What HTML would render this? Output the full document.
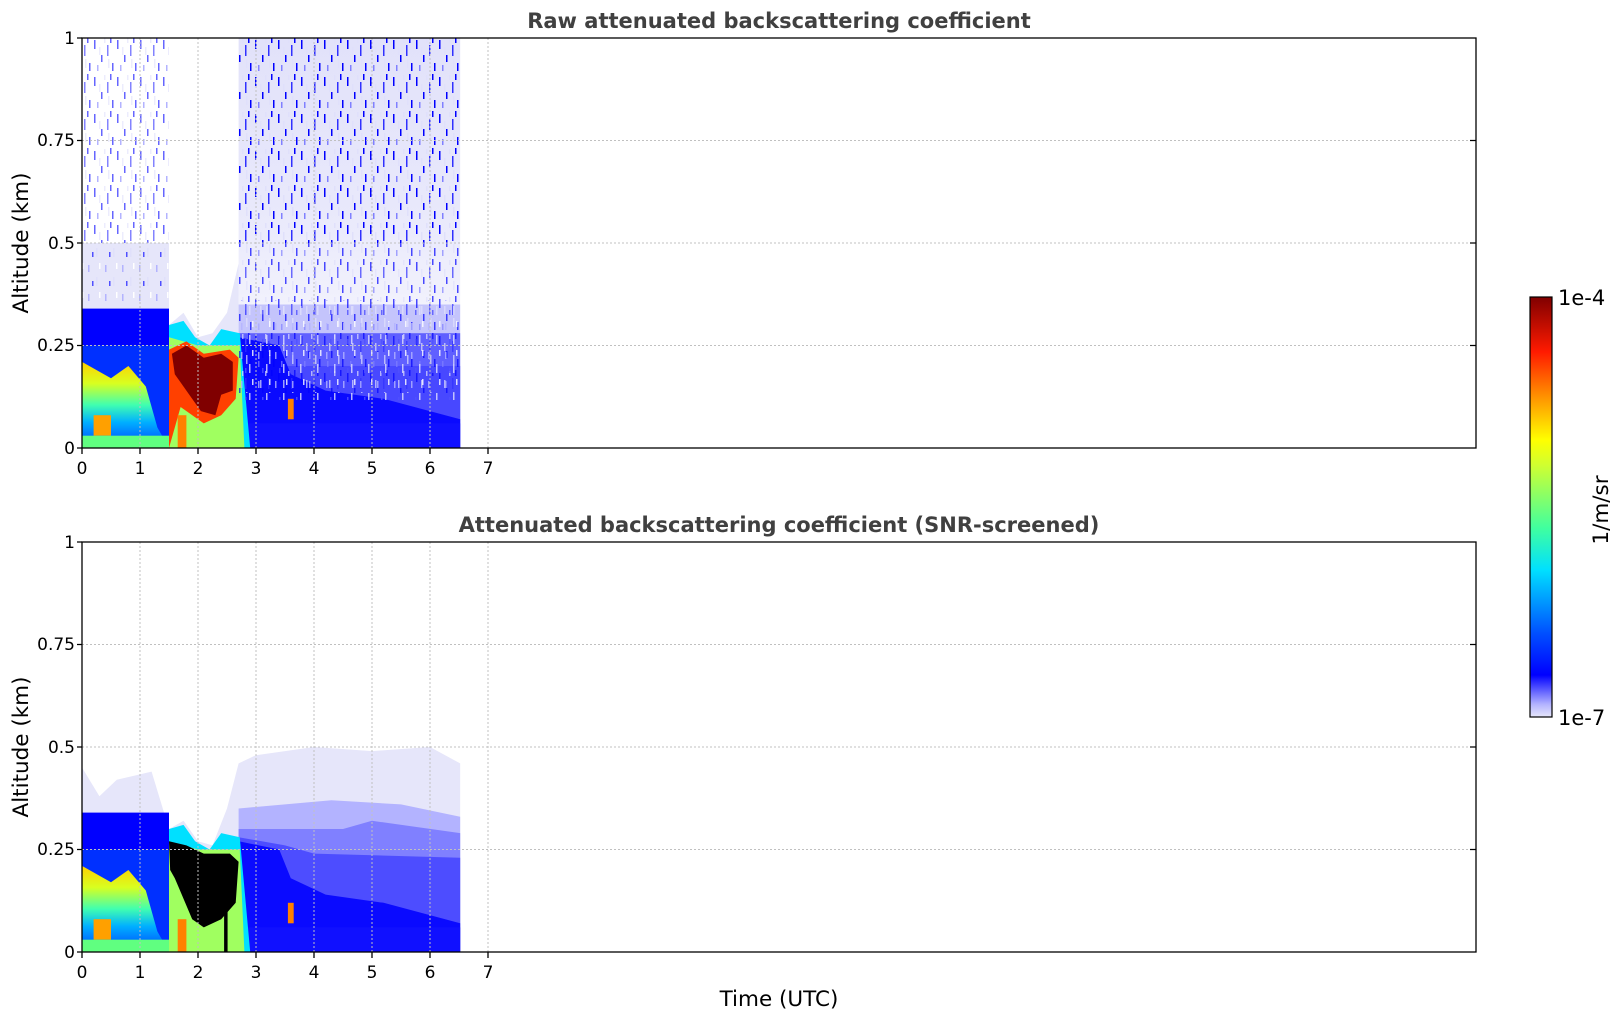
<!DOCTYPE html>
<html><head><meta charset="utf-8"><style>
body{margin:0;width:1621px;height:1020px;background:#fff;position:relative;overflow:hidden;font-family:"DejaVu Sans","Liberation Sans",sans-serif;}
</style></head><body>
<svg width="1621" height="1020" style="position:absolute;left:0;top:0" font-family="DejaVu Sans, Liberation Sans, sans-serif">
<defs>
<pattern id="sp" width="23" height="37" patternUnits="userSpaceOnUse">
<rect x="2" y="3" width="1.5" height="9" fill="#0000ff"/><rect x="9" y="18" width="1.5" height="7" fill="#0000ff"/><rect x="15" y="8" width="1.5" height="11" fill="#3030ff"/><rect x="20" y="26" width="1.5" height="8" fill="#0000ff"/><rect x="5" y="28" width="1.5" height="6" fill="#8080ff"/><rect x="12" y="1" width="1.5" height="5" fill="#e0e0fb"/><rect x="18" y="0" width="1.5" height="6" fill="#0000ff"/><rect x="7" y="10" width="1.5" height="8" fill="#e0e0fb"/><rect x="16" y="22" width="1.5" height="9" fill="#e0e0fb"/>
</pattern>
<pattern id="sp2" width="17" height="29" patternUnits="userSpaceOnUse">
<rect x="3" y="4" width="1.5" height="7" fill="#b3b3ff"/><rect x="11" y="16" width="1.5" height="9" fill="#e0e0fb"/><rect x="7" y="20" width="1.5" height="5" fill="#5050ff"/><rect x="14" y="2" width="1.5" height="6" fill="#ffffff"/>
</pattern>
<linearGradient id="g1" x1="0" y1="1" x2="0" y2="0">
<stop offset="0" stop-color="#ffd000"/><stop offset="0.25" stop-color="#d8ff20"/><stop offset="0.5" stop-color="#40ffb0"/><stop offset="0.7" stop-color="#00b0ff"/><stop offset="1" stop-color="#0040ff"/>
</linearGradient>
<linearGradient id="lv" x1="0" y1="1" x2="0" y2="0">
<stop offset="0" stop-color="#e2e2fa"/><stop offset="0.4" stop-color="#e8e8fb"/><stop offset="1" stop-color="#ffffff"/>
</linearGradient>
<linearGradient id="cb" x1="0" y1="1" x2="0" y2="0">
<stop offset="0" stop-color="#e6e6fa"/><stop offset="0.03" stop-color="#b3b3ff"/><stop offset="0.07" stop-color="#4d4dff"/><stop offset="0.1" stop-color="#0000ff"/><stop offset="0.2" stop-color="#0050ff"/><stop offset="0.35" stop-color="#00e0ff"/><stop offset="0.45" stop-color="#40ff9f"/><stop offset="0.6" stop-color="#d0ff30"/><stop offset="0.66" stop-color="#ffff00"/><stop offset="0.75" stop-color="#ffa000"/><stop offset="0.87" stop-color="#ff1a00"/><stop offset="1" stop-color="#800000"/>
</linearGradient>
</defs>

<!-- PLOT 1 -->
<g transform="translate(82,448) scale(58,-410)">
<rect x="0" y="0" width="1.5" height="0.5" fill="#e6e6fa"/>
<rect x="2.7" y="0" width="3.82" height="1" fill="url(#lv)"/>
<polygon points="1.5,0 1.5,0.3 1.75,0.33 2.0,0.27 2.25,0.28 2.5,0.33 2.7,0.45 2.7,0 " fill="#e6e6fa"/>
<rect x="2.7" y="0" width="3.82" height="0.35" fill="#c4c4fc"/>
<rect x="2.7" y="0" width="3.82" height="0.28" fill="#6060ff"/>
<rect x="2.7" y="0" width="3.82" height="0.2" fill="#4848ff"/>
<polygon points="2.7,0 2.7,0.27 3.4,0.25 3.6,0.18 4.2,0.14 5.2,0.12 6.52,0.07 6.52,0" fill="#0a0aff"/>
<rect x="2.7" y="0" width="3.82" height="0.06" fill="#1010ff"/>
<rect x="0" y="0" width="1.5" height="0.34" fill="#0000ff"/>
<rect x="0" y="0" width="1.5" height="0.25" fill="#0030ff"/>
<polygon points="0,0 0,0.21 0.5,0.17 0.8,0.2 1.1,0.15 1.3,0.05 1.5,0 " fill="url(#g1)"/>
<rect x="0.2" y="0.03" width="0.3" height="0.05" fill="#ffa000"/>
<polygon points="1.5,0 1.5,0.3 1.75,0.31 1.95,0.27 2.2,0.25 2.4,0.29 2.72,0.28 2.9,0 " fill="#00e0ff"/>
<polygon points="1.5,0 1.5,0.27 2.0,0.25 2.72,0.25 2.8,0 " fill="#a0ff60"/>
<polygon points="1.5,0.24 1.8,0.26 2.1,0.23 2.55,0.24 2.7,0.22 2.65,0.12 2.4,0.08 2.1,0.06 1.7,0.1 1.6,0.05 1.5,0" fill="#ff4000"/>
<polygon points="1.55,0.23 1.8,0.25 2.1,0.22 2.4,0.23 2.6,0.21 2.6,0.14 2.4,0.13 2.3,0.08 2.05,0.09 1.85,0.13 1.6,0.18" fill="#800000"/>
<rect x="1.65" y="0" width="0.15" height="0.08" fill="#ff8000"/>
<rect x="3.55" y="0.07" width="0.1" height="0.05" fill="#ff8000"/>
<rect x="0" y="0" width="1.5" height="0.03" fill="#60ff80"/>
</g>
<rect x="82" y="38" width="87" height="205" fill="url(#sp)" opacity="0.6"/>
<rect x="82" y="243" width="87" height="60" fill="url(#sp2)"/>
<rect x="239" y="38" width="221" height="205" fill="url(#sp)"/>
<rect x="239" y="243" width="221" height="150" fill="url(#sp)" opacity="0.7"/>
<rect x="239" y="300" width="221" height="100" fill="url(#sp2)" opacity="0.8"/>

<!-- PLOT 2 -->
<g transform="translate(82,952) scale(58,-410)">
<polygon points="0,0 0,0.45 0.3,0.38 0.6,0.42 1.2,0.44 1.5,0.3 1.75,0.32 2.0,0.27 2.25,0.26 2.5,0.35 2.7,0.46 3,0.48 4,0.5 5,0.49 6,0.5 6.52,0.46 6.52,0" fill="#e6e6fa"/>
<polygon points="2.7,0 2.7,0.35 3.5,0.36 4.3,0.37 5.5,0.36 6.52,0.33 6.52,0" fill="#b3b3ff"/>
<polygon points="2.7,0 2.7,0.3 4.5,0.3 5,0.32 6.52,0.29 6.52,0" fill="#8080ff"/>
<polygon points="2.7,0 2.7,0.28 3.5,0.26 4.0,0.24 6.52,0.23 6.52,0" fill="#4d4dff"/>
<polygon points="2.7,0 2.7,0.27 3.4,0.25 3.6,0.18 4.2,0.14 5.2,0.12 6.52,0.07 6.52,0" fill="#0a0aff"/>
<rect x="2.7" y="0" width="3.82" height="0.06" fill="#1010ff"/>
<rect x="0" y="0" width="1.5" height="0.34" fill="#0000ff"/>
<rect x="0" y="0" width="1.5" height="0.25" fill="#0030ff"/>
<polygon points="0,0 0,0.21 0.5,0.17 0.8,0.2 1.1,0.15 1.3,0.05 1.5,0 " fill="url(#g1)"/>
<rect x="0.2" y="0.03" width="0.3" height="0.05" fill="#ffa000"/>
<polygon points="1.5,0 1.5,0.3 1.75,0.31 1.95,0.27 2.2,0.25 2.4,0.29 2.72,0.28 2.9,0 " fill="#00e0ff"/>
<polygon points="1.5,0 1.5,0.27 2.0,0.25 2.72,0.25 2.8,0 " fill="#a0ff60"/>
<polygon points="1.5,0.27 1.8,0.26 2.1,0.24 2.55,0.24 2.7,0.22 2.65,0.12 2.4,0.08 2.1,0.06 1.9,0.08 1.6,0.18 1.52,0.2" fill="#000"/>
<rect x="2.45" y="0" width="0.06" height="0.2" fill="#000"/>
<rect x="1.65" y="0" width="0.15" height="0.08" fill="#ff8000"/>
<rect x="3.55" y="0.07" width="0.1" height="0.05" fill="#ff8000"/>
<rect x="0" y="0" width="1.5" height="0.03" fill="#60ff80"/>
</g>

<!-- grids, axes -->
<g stroke="#c0c0c0" stroke-width="1" stroke-dasharray="2,2">
<path d="M140 38V448M198 38V448M256 38V448M314 38V448M372 38V448M430 38V448M488 38V448M82 140.5H1476M82 243H1476M82 345.5H1476"/>
<path d="M140 542V952M198 542V952M256 542V952M314 542V952M372 542V952M430 542V952M488 542V952M82 644.5H1476M82 747H1476M82 849.5H1476"/>
</g>
<g fill="none" stroke="#000" stroke-width="1.3">
<rect x="82" y="38" width="1394" height="410"/>
<rect x="82" y="542" width="1394" height="410"/>
<path d="M82 38h-5M82 140.5h-5M82 243h-5M82 345.5h-5M82 448h-5M1476 140.5h-6M1476 243h-6M1476 345.5h-6M82 448v6M140 448v6M198 448v6M256 448v6M314 448v6M372 448v6M430 448v6M488 448v6"/>
<path d="M82 542h-5M82 644.5h-5M82 747h-5M82 849.5h-5M82 952h-5M1476 644.5h-6M1476 747h-6M1476 849.5h-6M82 952v6M140 952v6M198 952v6M256 952v6M314 952v6M372 952v6M430 952v6M488 952v6"/>
</g>
<g font-size="17" fill="#000">
<g text-anchor="end">
<text x="75" y="44">1</text><text x="75" y="146">0.75</text><text x="75" y="249">0.5</text><text x="75" y="351">0.25</text><text x="75" y="454">0</text>
<text x="75" y="548">1</text><text x="75" y="650">0.75</text><text x="75" y="753">0.5</text><text x="75" y="855">0.25</text><text x="75" y="958">0</text>
</g>
<g text-anchor="middle">
<text x="82" y="474">0</text><text x="140" y="474">1</text><text x="198" y="474">2</text><text x="256" y="474">3</text><text x="314" y="474">4</text><text x="372" y="474">5</text><text x="430" y="474">6</text><text x="488" y="474">7</text>
<text x="82" y="978">0</text><text x="140" y="978">1</text><text x="198" y="978">2</text><text x="256" y="978">3</text><text x="314" y="978">4</text><text x="372" y="978">5</text><text x="430" y="978">6</text><text x="488" y="978">7</text>
</g>
</g>
<g font-size="21.5" fill="#000" text-anchor="middle">
<text transform="translate(28,243) rotate(-90)">Altitude (km)</text>
<text transform="translate(28,747) rotate(-90)">Altitude (km)</text>
<text x="779" y="1006">Time (UTC)</text>
<text transform="translate(1608,510) rotate(-90)">1/m/sr</text>
</g>
<g font-size="21" font-weight="bold" fill="#404040" text-anchor="middle">
<text x="779" y="28">Raw attenuated backscattering coefficient</text>
<text x="779" y="532">Attenuated backscattering coefficient (SNR-screened)</text>
</g>
<rect x="1530" y="297" width="22" height="420" fill="url(#cb)" stroke="#000" stroke-width="1.2"/>
<g font-size="21" fill="#000"><text x="1558" y="305">1e-4</text><text x="1558" y="725">1e-7</text></g>
</svg>
</body></html>
